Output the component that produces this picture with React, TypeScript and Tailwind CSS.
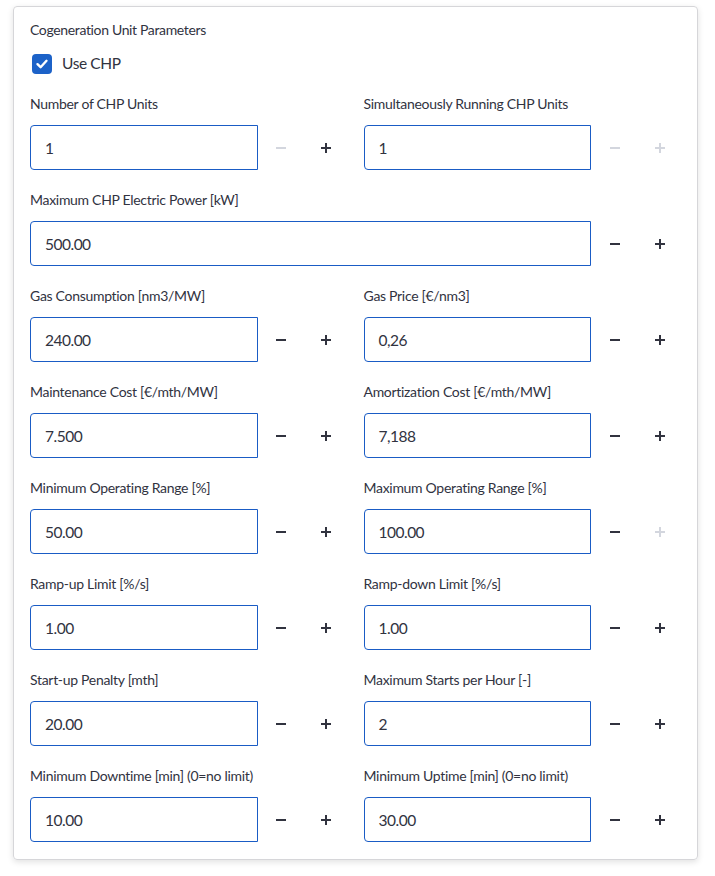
import React from 'react';

type Field = {
  label: string;
  value: string;
  minusDisabled?: boolean;
  plusDisabled?: boolean;
};

// rows of the form; a single-item row spans the full width
const rows: Field[][] = [
  [
    { label: 'Number of CHP Units', value: '1', minusDisabled: true },
    { label: 'Simultaneously Running CHP Units', value: '1', minusDisabled: true, plusDisabled: true },
  ],
  [{ label: 'Maximum CHP Electric Power [kW]', value: '500.00' }],
  [
    { label: 'Gas Consumption [nm3/MW]', value: '240.00' },
    { label: 'Gas Price [€/nm3]', value: '0,26' },
  ],
  [
    { label: 'Maintenance Cost [€/mth/MW]', value: '7.500' },
    { label: 'Amortization Cost [€/mth/MW]', value: '7,188' },
  ],
  [
    { label: 'Minimum Operating Range [%]', value: '50.00' },
    { label: 'Maximum Operating Range [%]', value: '100.00', plusDisabled: true },
  ],
  [
    { label: 'Ramp-up Limit [%/s]', value: '1.00' },
    { label: 'Ramp-down Limit [%/s]', value: '1.00' },
  ],
  [
    { label: 'Start-up Penalty [mth]', value: '20.00' },
    { label: 'Maximum Starts per Hour [-]', value: '2' },
  ],
  [
    { label: 'Minimum Downtime [min] (0=no limit)', value: '10.00' },
    { label: 'Minimum Uptime [min] (0=no limit)', value: '30.00' },
  ],
];

const MinusIcon = ({ disabled }: { disabled?: boolean }) => (
  <svg width="10" height="10" viewBox="0 0 10 10" className={disabled ? 'text-[#d3d6de]' : 'text-[#31333f]'}>
    <rect x="0" y="4" width="10" height="2" fill="currentColor" />
  </svg>
);

const PlusIcon = ({ disabled }: { disabled?: boolean }) => (
  <svg width="10" height="10" viewBox="0 0 10 10" className={disabled ? 'text-[#d3d6de]' : 'text-[#31333f]'}>
    <rect x="0" y="4" width="10" height="2" fill="currentColor" />
    <rect x="4" y="0" width="2" height="10" fill="currentColor" />
  </svg>
);

const NumberInput = ({ field }: { field: Field }) => (
  <div className="flex flex-col flex-1 min-w-0">
    <label className="text-[14px] leading-[20px] tracking-[-0.3px] text-[#31333f] h-[20px] whitespace-nowrap">
      {field.label}
    </label>
    <div className="flex mt-[11px] h-[45px]">
      <div className="flex-1 min-w-0 border border-[#1a5cc5] rounded-l-[4px] flex items-center pl-[14px] pt-[2px] text-[15.5px] tracking-[-0.5px] text-[#31333f]">
        {field.value}
      </div>
      <button className="w-[45px] pl-[2px] flex items-center justify-center">
        <MinusIcon disabled={field.minusDisabled} />
      </button>
      <button className="w-[45px] pl-[2px] flex items-center justify-center">
        <PlusIcon disabled={field.plusDisabled} />
      </button>
    </div>
  </div>
);

export default function App() {
  return (
    <div className="min-h-[876px] bg-white pt-[6px] px-[13px] font-['Lato',sans-serif]">
      <div className="w-[685px] border border-[#d6d6d9] rounded-[4px] shadow-[0_2px_6px_rgba(0,0,0,0.12)] px-4 pt-[13px] pb-[17px]">
        <div className="text-[14px] leading-[20px] tracking-[-0.35px] text-[#31333f]">Cogeneration Unit Parameters</div>
        <div className="flex items-center gap-[10px] mt-[12px] h-[24px] pl-[2px]">
          <span className="w-[20px] h-[20px] rounded-[4px] bg-[#1c62c8] flex items-center justify-center">
            <svg width="14" height="14" viewBox="0 0 14 14" fill="none">
              <path d="M2.5 7.2 L5.6 10.2 L11.5 3.8" stroke="white" strokeWidth="2.4" strokeLinecap="round" strokeLinejoin="round" />
            </svg>
          </span>
          <span className="text-[15.5px] tracking-[-0.4px] text-[#31333f]">Use CHP</span>
        </div>
        <div className="flex flex-col gap-[20px] mt-[18px]">
          {rows.map((row, i) => (
            <div key={i} className="flex gap-4">
              {row.map((f) => (
                <NumberInput key={f.label} field={f} />
              ))}
            </div>
          ))}
        </div>
      </div>
    </div>
  );
}
